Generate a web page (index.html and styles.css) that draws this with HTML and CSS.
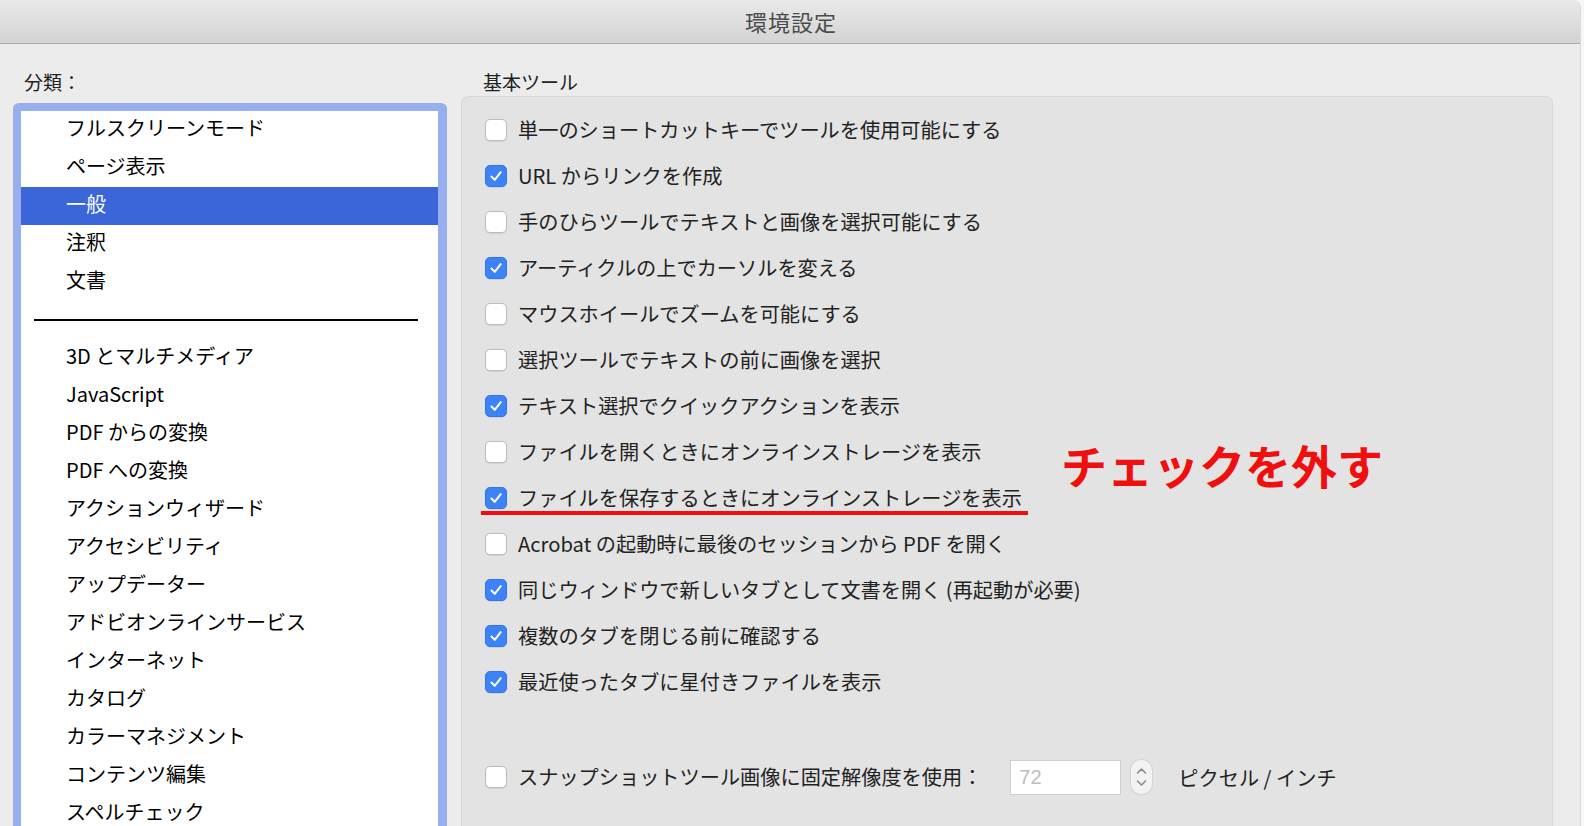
FILE: index.html
```html
<!DOCTYPE html>
<html lang="ja">
<head>
<meta charset="utf-8">
<title>環境設定</title>
<link rel="stylesheet" href="styles.css">
</head>
<body>
<div class="window">
  <div class="titlebar">環境設定</div>
  <div class="content">
    <div class="sidebar">
      <div class="heading">分類：</div>
      <div class="list">
        <div class="item">フルスクリーンモード</div>
        <div class="item">ページ表示</div>
        <div class="item selected">一般</div>
        <div class="item">注釈</div>
        <div class="item">文書</div>
        <div class="sep"><span></span></div>
        <div class="item">3D とマルチメディア</div>
        <div class="item">JavaScript</div>
        <div class="item">PDF からの変換</div>
        <div class="item">PDF への変換</div>
        <div class="item">アクションウィザード</div>
        <div class="item">アクセシビリティ</div>
        <div class="item">アップデーター</div>
        <div class="item">アドビオンラインサービス</div>
        <div class="item">インターネット</div>
        <div class="item">カタログ</div>
        <div class="item">カラーマネジメント</div>
        <div class="item">コンテンツ編集</div>
        <div class="item">スペルチェック</div>
      </div>
    </div>
    <div class="main">
      <div class="heading">基本ツール</div>
      <div class="panel">
        <div class="row"><span class="cb"></span><span class="label">単一のショートカットキーでツールを使用可能にする</span></div>
        <div class="row"><span class="cb on"><svg viewBox="0 0 22 22"><path d="M6 11.6 L9.6 15.2 L16.2 6.8"/></svg></span><span class="label">URL からリンクを作成</span></div>
        <div class="row"><span class="cb"></span><span class="label">手のひらツールでテキストと画像を選択可能にする</span></div>
        <div class="row"><span class="cb on"><svg viewBox="0 0 22 22"><path d="M6 11.6 L9.6 15.2 L16.2 6.8"/></svg></span><span class="label">アーティクルの上でカーソルを変える</span></div>
        <div class="row"><span class="cb"></span><span class="label">マウスホイールでズームを可能にする</span></div>
        <div class="row"><span class="cb"></span><span class="label">選択ツールでテキストの前に画像を選択</span></div>
        <div class="row"><span class="cb on"><svg viewBox="0 0 22 22"><path d="M6 11.6 L9.6 15.2 L16.2 6.8"/></svg></span><span class="label">テキスト選択でクイックアクションを表示</span></div>
        <div class="row"><span class="cb"></span><span class="label">ファイルを開くときにオンラインストレージを表示</span></div>
        <div class="row marked"><span class="cb on"><svg viewBox="0 0 22 22"><path d="M6 11.6 L9.6 15.2 L16.2 6.8"/></svg></span><span class="label">ファイルを保存するときにオンラインストレージを表示</span><span class="redline"></span></div>
        <div class="row"><span class="cb"></span><span class="label">Acrobat の起動時に最後のセッションから PDF を開く</span></div>
        <div class="row"><span class="cb on"><svg viewBox="0 0 22 22"><path d="M6 11.6 L9.6 15.2 L16.2 6.8"/></svg></span><span class="label">同じウィンドウで新しいタブとして文書を開く (再起動が必要)</span></div>
        <div class="row"><span class="cb on"><svg viewBox="0 0 22 22"><path d="M6 11.6 L9.6 15.2 L16.2 6.8"/></svg></span><span class="label">複数のタブを閉じる前に確認する</span></div>
        <div class="row"><span class="cb on"><svg viewBox="0 0 22 22"><path d="M6 11.6 L9.6 15.2 L16.2 6.8"/></svg></span><span class="label">最近使ったタブに星付きファイルを表示</span></div>
        <div class="row snap">
          <span class="cb"></span><span class="label">スナップショットツール画像に固定解像度を使用：</span>
          <span class="num">72</span>
          <span class="stepper"><svg viewBox="0 0 21 34"><path d="M6.5 13 L10.5 9 L14.5 13"/><path d="M6.5 21 L10.5 25 L14.5 21"/></svg></span>
          <span class="unit">ピクセル / インチ</span>
        </div>
        <div class="note">チェックを外す</div>
      </div>
    </div>
  </div>
</div>
</body>
</html>
```
FILE: styles.css
```css
html, body {
  margin: 0;
  padding: 0;
  background: #f7f7f7;
  overflow: hidden;
}
body {
  width: 1584px;
  height: 826px;
  font-family: "Noto Sans CJK JP", "Noto Sans", sans-serif;
  color: #1e1e1e;
}
.window {
  width: 1580px;
  height: 826px;
  background: #ececec;
  border-right: 1px solid #dadada;
  border-top-right-radius: 8px;
  overflow: hidden;
  display: flex;
  flex-direction: column;
}
.titlebar {
  height: 43px;
  flex: none;
  background: linear-gradient(#e9e9e9, #d3d3d3);
  border-bottom: 1px solid #ababab;
  text-align: center;
  font-size: 22px;
  line-height: 43px;
  color: #4b4b4b;
  letter-spacing: 1px;
  padding-left: 2px;
}
.content {
  display: flex;
  flex: 1;
  min-height: 0;
}
.heading {
  font-size: 19px;
  line-height: 26px;
  height: 26px;
  margin-top: 25px;
  color: #222;
}
.sidebar {
  width: 434px;
  margin-left: 13px;
  flex: none;
}
.sidebar .heading {
  padding-left: 11px;
}
.list {
  margin-top: 8px;
  border: 8px solid #98afef;
  border-right-width: 9px;
  border-radius: 6px;
  border-bottom: none;
  background: #fff;
  padding-top: 0;
  height: 760px;
}
.item {
  height: 38px;
  line-height: 34px;
  font-size: 20px;
  padding-left: 45px;
  color: #000;
  white-space: nowrap;
  box-sizing: border-box;
}
.item.selected {
  background: #3a66da;
  color: #fff;
}
.sep {
  height: 38px;
  display: flex;
  align-items: center;
  padding-left: 13px;
  padding-right: 20px;
}
.sep span {
  flex: 1;
  height: 2px;
  background: #000;
}
.main {
  margin-left: 14px;
  width: 1092px;
  flex: none;
}
.main .heading {
  padding-left: 22px;
}
.panel {
  position: relative;
  margin-top: 1px;
  background: #e3e3e3;
  border: 1px solid #d7d7d7;
  border-radius: 7px;
  height: 760px;
  padding: 10px 0 0 23px;
}
.row {
  position: relative;
  height: 46px;
  display: flex;
  align-items: center;
  font-size: 20.2px;
  color: #222;
  white-space: nowrap;
}
.label {
  position: relative;
  top: -1px;
}
.cb {
  width: 20px;
  height: 20px;
  border: 1px solid #bcbcbc;
  border-radius: 5px;
  background: #fff;
  flex: none;
  margin-right: 11px;
  box-shadow: 0 0.5px 1px rgba(0,0,0,0.08);
}
.cb.on {
  background: #3d82f6;
  border-color: #3476e8;
}
.cb svg {
  display: block;
  width: 20px;
  height: 20px;
}
.cb path {
  fill: none;
  stroke: #fff;
  stroke-width: 2.2;
  stroke-linecap: round;
  stroke-linejoin: round;
}
.redline {
  position: absolute;
  left: -4px;
  top: 36px;
  width: 547px;
  height: 4px;
  background: #f00f0f;
}
.snap {
  margin-top: 49px;
}
.num {
  margin-left: 28px;
  width: 101px;
  height: 33px;
  border: 1px solid #cfcfcf;
  background: #fff;
  color: #bdbdbd;
  line-height: 33px;
  padding-left: 8px;
  font-size: 20px;
  font-family: "Liberation Sans", "Noto Sans", sans-serif;
}
.stepper {
  margin-left: 10px;
  width: 21px;
  height: 34px;
  border-radius: 10px;
  background: #f2f2f2;
  box-shadow: 0 0 0 1px #d4d4d4;
}
.stepper svg {
  display: block;
  width: 21px;
  height: 34px;
}
.stepper path {
  fill: none;
  stroke: #8a8a8a;
  stroke-width: 1.6;
  stroke-linecap: round;
  stroke-linejoin: round;
}
.unit {
  margin-left: 26px;
}
.note {
  position: absolute;
  left: 599px;
  top: 337px;
  font-size: 46px;
  font-weight: 700;
  line-height: 60px;
  color: #f00f0f;
  white-space: nowrap;
}
```
